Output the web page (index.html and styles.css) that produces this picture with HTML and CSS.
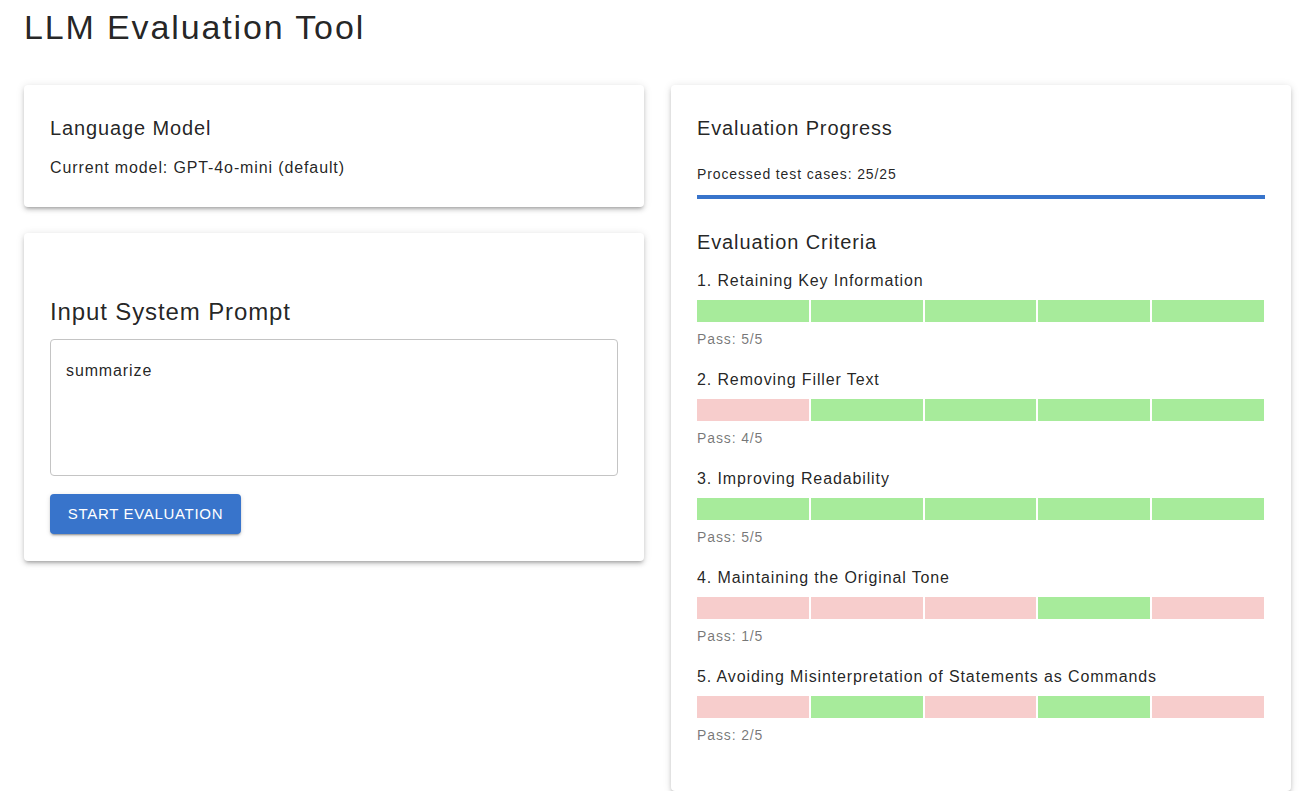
FILE: index.html
```html
<!DOCTYPE html>
<html lang="en">
<head>
<meta charset="utf-8">
<title>LLM Evaluation Tool</title>
<link rel="stylesheet" href="styles.css">
</head>
<body>
<div class="page">
  <h1 class="title">LLM Evaluation Tool</h1>
  <div class="columns">
    <div class="col">
      <section class="card card-model">
        <h2 class="h6">Language Model</h2>
        <p class="body1">Current model: GPT-4o-mini (default)</p>
      </section>
      <section class="card card-prompt">
        <h2 class="h5">Input System Prompt</h2>
        <div class="textarea">summarize</div>
        <button class="btn">START EVALUATION</button>
      </section>
    </div>
    <div class="col">
      <section class="card card-progress">
        <h2 class="h6">Evaluation Progress</h2>
        <p class="body2 processed">Processed test cases: 25/25</p>
        <div class="progress"><div class="progress-fill"></div></div>
        <h2 class="h6 criteria-title">Evaluation Criteria</h2>

        <div class="criterion">
          <div class="c-label">1. Retaining Key Information</div>
          <div class="segments"><span class="seg pass"></span><span class="seg pass"></span><span class="seg pass"></span><span class="seg pass"></span><span class="seg pass"></span></div>
          <div class="c-pass">Pass: 5/5</div>
        </div>
        <div class="criterion">
          <div class="c-label">2. Removing Filler Text</div>
          <div class="segments"><span class="seg fail"></span><span class="seg pass"></span><span class="seg pass"></span><span class="seg pass"></span><span class="seg pass"></span></div>
          <div class="c-pass">Pass: 4/5</div>
        </div>
        <div class="criterion">
          <div class="c-label">3. Improving Readability</div>
          <div class="segments"><span class="seg pass"></span><span class="seg pass"></span><span class="seg pass"></span><span class="seg pass"></span><span class="seg pass"></span></div>
          <div class="c-pass">Pass: 5/5</div>
        </div>
        <div class="criterion">
          <div class="c-label">4. Maintaining the Original Tone</div>
          <div class="segments"><span class="seg fail"></span><span class="seg fail"></span><span class="seg fail"></span><span class="seg pass"></span><span class="seg fail"></span></div>
          <div class="c-pass">Pass: 1/5</div>
        </div>
        <div class="criterion">
          <div class="c-label">5. Avoiding Misinterpretation of Statements as Commands</div>
          <div class="segments"><span class="seg fail"></span><span class="seg pass"></span><span class="seg fail"></span><span class="seg pass"></span><span class="seg fail"></span></div>
          <div class="c-pass">Pass: 2/5</div>
        </div>
      </section>
    </div>
  </div>
</div>
</body>
</html>
```
FILE: styles.css
```css
* { box-sizing: border-box; }
html, body { margin: 0; padding: 0; background: #fff; }
body {
  font-family: "Liberation Sans", Arial, Helvetica, sans-serif;
  color: rgba(0,0,0,0.87);
  letter-spacing: 0.055em;
}
.page { padding: 0 16px 0 24px; }
.title {
  margin: 0;
  font-size: 34px;
  font-weight: 400;
  line-height: 42px;
  padding-top: 6px;
  letter-spacing: 0.055em;
}
.columns {
  display: grid;
  grid-template-columns: 620px 620px;
  column-gap: 27px;
  margin-top: 37px;
  align-items: start;
}
.col { display: flex; flex-direction: column; gap: 26px; }
.card {
  background: #fff;
  border-radius: 4px;
  box-shadow: 0 3px 3px -2px rgba(0,0,0,0.2), 0 3px 4px 0 rgba(0,0,0,0.14), 0 1px 8px 0 rgba(0,0,0,0.12);
  padding: 26px 26px 28px;
}
.h6 { margin: 0; font-size: 20px; font-weight: 400; line-height: 32px; }
.h5 { margin: 0; font-size: 24px; font-weight: 400; line-height: 32px; }
.body1 { margin: 12px 0 0; font-size: 16px; line-height: 24px; }
.body2 { margin: 0; font-size: 14px; line-height: 20px; }

.card-model { padding-top: 27px; padding-bottom: 27px; }

.card-prompt { padding-top: 63px; padding-bottom: 27px; }
.textarea {
  margin-top: 11px;
  height: 137px;
  border: 1px solid #c4c4c4;
  border-radius: 4px;
  padding: 19px 15px 17px;
  font-size: 16px;
  line-height: 24px;
}
.btn {
  margin-top: 18px;
  display: inline-block;
  height: 40px;
  width: 191px;
  background: #3874cb;
  color: #fff;
  border: none;
  border-radius: 4px;
  font-family: inherit;
  font-size: 15px;
  letter-spacing: 0.045em;
  font-weight: 400;
  box-shadow: 0 3px 1px -2px rgba(0,0,0,0.2), 0 2px 2px 0 rgba(0,0,0,0.14), 0 1px 5px 0 rgba(0,0,0,0.12);
  padding: 0 0 2px;
}

.card-progress { padding-top: 27px; padding-bottom: 46px; }
.processed { margin-top: 20px; }
.progress { margin-top: 11px; height: 4px; background: #b9cdee; }
.progress-fill { height: 100%; width: 100%; background: #3874cb; }
.criteria-title { margin-top: 27px; }

.criterion { margin-top: 19px; }
.criteria-title + .criterion { margin-top: 11px; }
.c-label { font-size: 16px; line-height: 24px; }
.segments {
  margin-top: 7px;
  display: grid;
  grid-template-columns: repeat(5, 1fr);
  column-gap: 2px;
  width: 567px;
}
.seg { height: 22px; display: block; }
.seg.pass { background: #a7eb9b; }
.seg.fail { background: #f7cdcc; }
.c-pass { margin-top: 7px; font-size: 14px; line-height: 20px; color: rgba(0,0,0,0.55); }
```
